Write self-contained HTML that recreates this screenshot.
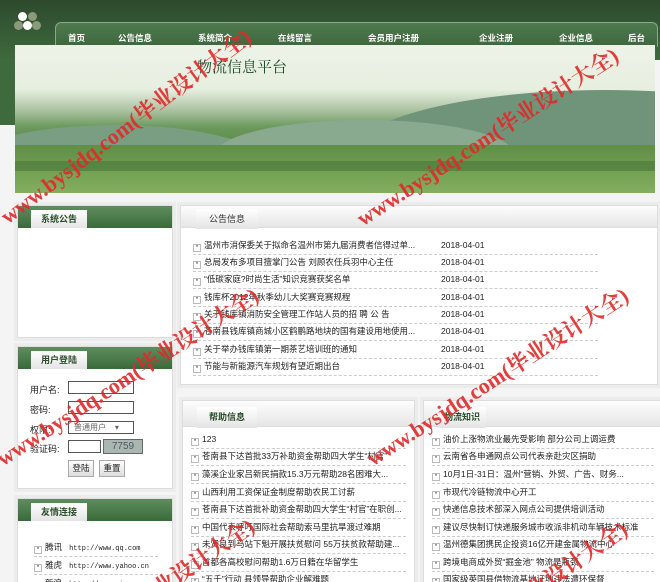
<!DOCTYPE html>
<html><head><meta charset="utf-8"><style>
*{margin:0;padding:0;box-sizing:border-box}
html,body{width:660px;height:582px;overflow:hidden}
body{background:#f4f4f4;font-family:"Liberation Sans","Noto Sans CJK SC",sans-serif;font-size:9px;color:#222}
#wrap{position:relative;width:660px;height:582px;overflow:hidden}
.abs{position:absolute}
.top{left:0;top:0;width:660px;height:60px;background:linear-gradient(#2d4a2d,#3e6a3e)}
.side{left:0;top:60px;width:16px;height:65px;background:#3e6a3e}
.nav{left:55px;top:22px;width:603px;height:25px;border:1px solid #8aa88a;border-bottom:none;border-radius:6px 6px 0 0;background:linear-gradient(#4f7a4f,#3d663d)}
.nav span{position:absolute;top:9px;color:#fff;font-weight:bold;font-size:8.5px}
.banner{left:15px;top:45px;width:640px;height:148px;background:linear-gradient(#eef3e8 0,#e6efe0 30%,#a7bf9d 45%,#6c9a5f 55%,#5c8a45 68%,#78a657 85%,#8bb465 100%);overflow:hidden}
.mtn{position:absolute;background:#6f9479;border-radius:50%}
.title{left:197px;top:56px;font-family:"Liberation Serif","Noto Serif CJK SC",serif;font-size:15px;color:#1f4a2a}
.box{background:#fff;border:1px solid #ddd;box-shadow:0 0 0 3px #ececec}
.gh{height:22px;background:linear-gradient(#5f8d5f,#3a6a3a)}
.tab{position:absolute;height:18px;background:linear-gradient(#fff,#e4e4e4);color:#2b4d2b;font-weight:bold;font-size:9px;text-align:center;line-height:18px}
.wh{height:22px;background:linear-gradient(#fdfdfd,#e6e6e6);border-bottom:1px solid #ddd}
.li{position:absolute;font-size:8.5px;white-space:nowrap;border-bottom:1px dashed #ccc;height:18px;line-height:16px}
.li:before{content:"▪";color:#888;font-size:7px;margin-right:3px;border:1px solid #bbb;display:inline-block;width:6px;height:6px;line-height:4px;text-align:center}
.inp{position:absolute;background:#fff;border:1px solid #555;height:13px}
.btn{position:absolute;border:1px solid #aaa;background:linear-gradient(#fff,#ddd);font-size:8.5px;text-align:center;line-height:15px;height:17px}
.wm{position:absolute;color:#e02a2a;font-family:"Liberation Serif","Noto Serif CJK SC",serif;font-size:22px;line-height:22px;font-weight:bold;white-space:nowrap;transform-origin:0 100%;opacity:.9}
</style></head><body><div id="wrap">
<div class="abs top"></div><div class="abs side"></div>
<div class="abs" style="left:18px;top:12px;width:30px;height:20px">
<div class="abs" style="left:0;top:0;width:9px;height:9px;border-radius:50%;background:#fff"></div>
<div class="abs" style="left:10px;top:0;width:9px;height:9px;border-radius:50%;background:#8a9a7a"></div>
<div class="abs" style="left:-4px;top:9px;width:9px;height:9px;border-radius:50%;background:#8a9a7a"></div>
<div class="abs" style="left:5px;top:9px;width:9px;height:9px;border-radius:50%;background:#fff"></div>
<div class="abs" style="left:14px;top:9px;width:9px;height:9px;border-radius:50%;background:#8a9a7a"></div></div>
<div class="abs nav"><span style="left:12px">首页</span><span style="left:62px">公告信息</span><span style="left:142px">系统简介</span><span style="left:222px">在线留言</span><span style="left:312px">会员用户注册</span><span style="left:423px">企业注册</span><span style="left:503px">企业信息</span><span style="left:572px">后台</span></div>
<div class="abs banner">
<div class="mtn" style="left:330px;top:45px;width:520px;height:140px"></div>
<div class="mtn" style="left:-60px;top:80px;width:320px;height:90px;background:#7a9e82"></div>
<div class="mtn" style="left:200px;top:75px;width:300px;height:70px;background:#8aaa90"></div>
<div class="abs" style="left:0;top:100px;width:640px;height:48px;background:linear-gradient(#5e8f45,#84ae5f)"></div>
<div class="abs" style="left:0;top:116px;width:640px;height:10px;background:#3f6e33;opacity:.5"></div>
</div>
<div class="abs title">物流信息平台</div>

<div class="abs box" style="left:17px;top:205px;width:156px;height:133px"><div class="gh"></div><div class="tab" style="left:13px;top:4px;width:56px">系统公告</div></div>
<div class="abs box" style="left:17px;top:346px;width:156px;height:143px"><div class="gh"></div><div class="tab" style="left:13px;top:4px;width:56px">用户登陆</div>
<div class="abs" style="left:12px;top:36px">用户名:</div><div class="inp" style="left:50px;top:34px;width:66px"></div>
<div class="abs" style="left:12px;top:56px">密码:</div><div class="inp" style="left:50px;top:54px;width:66px"></div>
<div class="abs" style="left:12px;top:76px">权限:</div><div class="inp" style="left:50px;top:74px;width:66px;color:#666;font-size:8px;padding-left:5px">普通用户 &nbsp;&nbsp;&nbsp;▾</div>
<div class="abs" style="left:12px;top:95px">验证码:</div><div class="inp" style="left:50px;top:93px;width:33px"></div>
<div class="abs" style="left:85px;top:92px;width:40px;height:15px;background:#a8b8b0;border:1px solid #666;color:#556;font-size:10px;line-height:13px;text-align:center">7759</div>
<div class="btn" style="left:50px;top:113px;width:26px">登陆</div><div class="btn" style="left:81px;top:113px;width:26px">重置</div>
</div>
<div class="abs box" style="left:17px;top:498px;width:156px;height:90px"><div class="gh"></div><div class="tab" style="left:13px;top:4px;width:56px">友情连接</div>
<div class="li" style="left:16px;top:40px;width:124px">腾讯 &nbsp;&nbsp;<span style="font-family:'Liberation Mono';font-size:7px">http://www.qq.com</span></div>
<div class="li" style="left:16px;top:58px;width:124px">雅虎 &nbsp;&nbsp;<span style="font-family:'Liberation Mono';font-size:7px">http://www.yahoo.cn</span></div>
<div class="li" style="left:16px;top:76px;width:124px">新浪 &nbsp;&nbsp;<span style="font-family:'Liberation Mono';font-size:7px">http://www.sina.com</span></div>
</div>

<div class="abs box" style="left:180px;top:205px;width:478px;height:180px"><div class="wh"></div><div class="tab" style="left:15px;top:3px;width:62px;height:20px;line-height:20px;font-weight:normal;color:#333">公告信息</div>
<div class="li" style="left:12px;top:31px;width:405px">温州市消保委关于拟命名温州市第九届消费者信得过单...<span class="abs" style="left:248px">2018-04-01</span></div>
<div class="li" style="left:12px;top:48px;width:405px">总局发布多项目擅掌门公告 刘顾农任兵羽中心主任<span class="abs" style="left:248px">2018-04-01</span></div>
<div class="li" style="left:12px;top:65px;width:405px">“低碳家庭?时尚生活”知识竞赛获奖名单<span class="abs" style="left:248px">2018-04-01</span></div>
<div class="li" style="left:12px;top:83px;width:405px">钱库杯2012年秋季幼儿大奖赛竞赛规程<span class="abs" style="left:248px">2018-04-01</span></div>
<div class="li" style="left:12px;top:100px;width:405px">关于钱库镇消防安全管理工作站人员的招 聘 公 告<span class="abs" style="left:248px">2018-04-01</span></div>
<div class="li" style="left:12px;top:117px;width:405px">苍南县钱库镇商城小区鹤鹏路地块的国有建设用地使用...<span class="abs" style="left:248px">2018-04-01</span></div>
<div class="li" style="left:12px;top:135px;width:405px">关于举办钱库镇第一期茶艺培训班的通知<span class="abs" style="left:248px">2018-04-01</span></div>
<div class="li" style="left:12px;top:152px;width:405px">节能与新能源汽车规划有望近期出台<span class="abs" style="left:248px">2018-04-01</span></div>
</div>

<div class="abs box" style="left:182px;top:400px;width:233px;height:190px"><div class="wh" style="height:26px"></div><div class="tab" style="left:14px;top:6px;width:60px;height:21px;line-height:21px">帮助信息</div>
<div class="li" style="left:8px;top:30px;width:215px">123</div>
<div class="li" style="left:8px;top:47px;width:215px">苍南县下达首批33万补助资金帮助四大学生“村官”</div>
<div class="li" style="left:8px;top:65px;width:215px">藻溪企业家吕新民捐款15.3万元帮助28名困难大...</div>
<div class="li" style="left:8px;top:83px;width:215px">山西利用工资保证金制度帮助农民工讨薪</div>
<div class="li" style="left:8px;top:100px;width:215px">苍南县下达首批补助资金帮助四大学生“村官”在职创...</div>
<div class="li" style="left:8px;top:118px;width:215px">中国代表呼吁国际社会帮助索马里抗旱渡过难期</div>
<div class="li" style="left:8px;top:135px;width:215px">未贤良到马站下魁开展扶贫慰问 55万扶贫款帮助建...</div>
<div class="li" style="left:8px;top:153px;width:215px">首都各高校慰问帮助1.6万日籍在华留学生</div>
<div class="li" style="left:8px;top:170px;width:215px">“五千”行动 县领导帮助企业解难题</div>
</div>
<div class="abs box" style="left:423px;top:400px;width:240px;height:190px"><div class="wh" style="height:26px"></div><div class="tab" style="left:14px;top:6px;width:48px;height:21px;line-height:21px">物流知识</div>
<div class="li" style="left:8px;top:30px;width:222px">油价上涨物流业最先受影响 部分公司上调运费</div>
<div class="li" style="left:8px;top:47px;width:222px">云南省各申通网点公司代表亲赴灾区捐助</div>
<div class="li" style="left:8px;top:65px;width:222px">10月1日-31日：温州“营销、外贸、广告、财务...</div>
<div class="li" style="left:8px;top:83px;width:222px">市现代冷链物流中心开工</div>
<div class="li" style="left:8px;top:100px;width:222px">快递信息技术部深入网点公司提供培训活动</div>
<div class="li" style="left:8px;top:118px;width:222px">建议尽快制订快递服务城市收派非机动车辆技术标准</div>
<div class="li" style="left:8px;top:135px;width:222px">温州德集团携民企投资16亿开建金属物流中心</div>
<div class="li" style="left:8px;top:153px;width:222px">跨境电商成外贸“掘金池” 物流是瓶颈</div>
<div class="li" style="left:8px;top:170px;width:222px">国家级英国县借物流基地证地违法遭环保督</div>
</div>

<div class="wm" style="left:10px;top:206px;transform:rotate(-37deg)">www.bysjdq.com(毕业设计大全)</div>
<div class="wm" style="left:5px;top:448px;transform:rotate(-33deg)">www.bysjdq.com(毕业设计大全)</div>
<div class="wm" style="left:365px;top:208px;transform:rotate(-33deg)">www.bysjdq.com(毕业设计大全)</div>
<div class="wm" style="left:375px;top:448px;transform:rotate(-33deg)">www.bysjdq.com(毕业设计大全)</div>
<div class="wm" style="left:7px;top:687px;transform:rotate(-35deg)">www.bysjdq.com(毕业设计大全)</div>
<div class="wm" style="left:380px;top:690px;transform:rotate(-35deg)">www.bysjdq.com(毕业设计大全)</div>
</div></body></html>
